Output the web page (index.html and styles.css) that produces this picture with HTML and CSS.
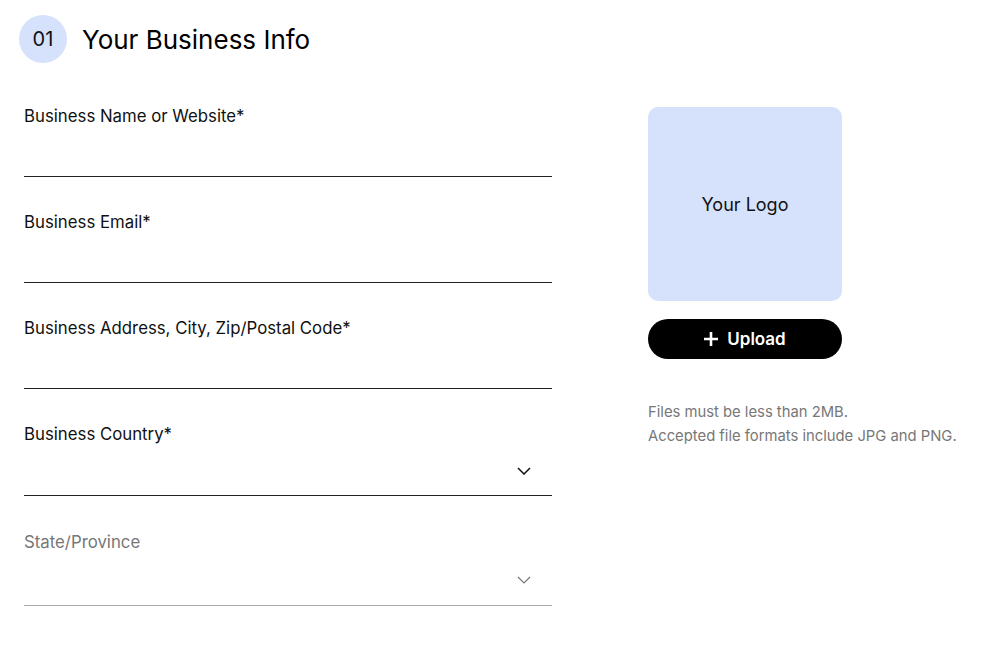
FILE: index.html
```html
<!DOCTYPE html>
<html lang="en">
<head>
    <meta charset="UTF-8">
    <meta name="viewport" content="width=device-width, initial-scale=1.0">
    <title>Your Business Info</title>
    <link rel="stylesheet" href="styles.css">
</head>
<body>
    <div class="page">
        <div class="header">
            <div class="step">01</div>
            <h1 class="title">Your Business Info</h1>
        </div>
        <div class="content">
            <div class="form">
                <div class="field">
                    <label class="label">Business Name or Website*</label>
                    <div class="input"></div>
                </div>
                <div class="field">
                    <label class="label">Business Email*</label>
                    <div class="input"></div>
                </div>
                <div class="field">
                    <label class="label">Business Address, City, Zip/Postal Code*</label>
                    <div class="input"></div>
                </div>
                <div class="field select">
                    <label class="label">Business Country*</label>
                    <div class="input">
                        <svg class="chevron" width="14" height="8" viewBox="0 0 14 8"><path d="M1 1 L7 7 L13 1" fill="none" stroke="currentColor" stroke-width="1.5"/></svg>
                    </div>
                </div>
                <div class="field select disabled">
                    <label class="label">State/Province</label>
                    <div class="input">
                        <svg class="chevron" width="14" height="8" viewBox="0 0 14 8"><path d="M1 1 L7 7 L13 1" fill="none" stroke="currentColor" stroke-width="1.2"/></svg>
                    </div>
                </div>
            </div>
            <div class="logo-panel">
                <div class="logo-box">Your Logo</div>
                <button class="upload">
                    <svg width="14" height="14" viewBox="0 0 14 14"><path d="M7 0 V14 M0 7 H14" stroke="currentColor" stroke-width="2.6"/></svg>
                    Upload
                </button>
                <p class="note">Files must be less than 2MB.<br>Accepted file formats include JPG and PNG.</p>
            </div>
        </div>
    </div>
</body>
</html>
```

FILE: styles.css
```css
body {
    margin: 0;
    font-family: Inter, "Noto Sans", sans-serif;
    background-color: #fff;
    color: #000;
}

.page {
    padding: 15px 24px;
}

.header {
    display: flex;
    align-items: center;
    gap: 15px;
    margin-left: -5px;
}

.step {
    width: 48px;
    height: 48px;
    border-radius: 50%;
    background-color: #d6e2fc;
    display: flex;
    align-items: center;
    justify-content: center;
    font-size: 20px;
    color: #111;
}

.title {
    margin: 0;
    font-size: 26px;
    font-weight: 400;
}

.content {
    display: flex;
    gap: 96px;
    margin-top: 41px;
}

.form {
    width: 528px;
}

.field {
    margin-bottom: 33px;
}

.field.select {
    margin-bottom: 34px;
}

.label {
    display: block;
    font-size: 16.8px;
    line-height: 24px;
    color: #111;
}

.input {
    height: 48px;
    border-bottom: 1px solid #222;
    display: flex;
    align-items: center;
    justify-content: flex-end;
    padding-right: 21px;
}

.field.select .input {
    height: 49px;
}

.field.select.disabled .input {
    height: 51px;
    border-bottom-color: #aaa;
}

.field.disabled .label {
    color: #777;
}

.field.disabled .chevron {
    color: #777;
}

.chevron {
    color: #111;
}

.logo-panel {
    width: 194px;
    padding-top: 3px;
}

.logo-box {
    height: 194px;
    border-radius: 10px;
    background-color: #d6e2fc;
    display: flex;
    align-items: center;
    justify-content: center;
    font-size: 18px;
    color: #111;
}

.upload {
    margin-top: 18px;
    width: 194px;
    height: 40px;
    border: none;
    border-radius: 20px;
    background-color: #000;
    color: #fff;
    font-family: inherit;
    font-size: 17px;
    font-weight: 600;
    display: flex;
    align-items: center;
    justify-content: center;
    gap: 9px;
    cursor: pointer;
}

.note {
    margin: 41px 0 0;
    width: 340px;
    font-size: 14.8px;
    line-height: 24px;
    color: #777;
}
```
